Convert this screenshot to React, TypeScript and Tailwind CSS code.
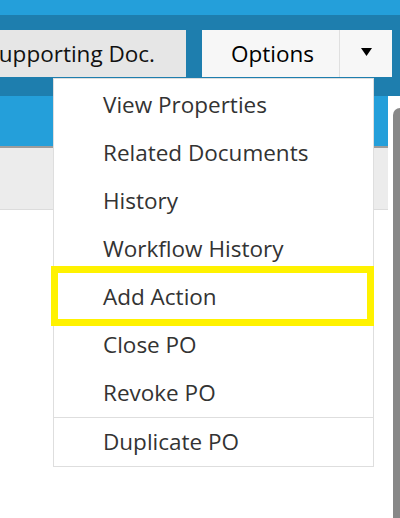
import { ReactNode } from 'react';

const items = [
  'View Properties',
  'Related Documents',
  'History',
  'Workflow History',
  'Add Action',
  'Close PO',
  'Revoke PO',
];

function MenuItem({ label, highlighted }: { label: string; highlighted?: boolean }) {
  return (
    <div className="relative h-[48px] flex items-center pl-[49px] text-[22.5px] text-[#333]">
      {label}
      {highlighted && (
        <div className="absolute left-[-3px] right-[-1px] top-[-7px] bottom-[-5px] border-[7px] border-[#fff200]" />
      )}
    </div>
  );
}

function ToolbarButton({ children, className }: { children: ReactNode; className?: string }) {
  return <div className={`h-[47px] shrink-0 flex items-center ${className ?? ''}`}>{children}</div>;
}

export default function App() {
  return (
    <div
      className="relative w-[400px] h-[518px] overflow-hidden bg-white"
      style={{ fontFamily: '"Open Sans", "Noto Sans", sans-serif' }}
    >
      {/* top strip */}
      <div className="h-[15px] bg-[#249fda]" />

      {/* toolbar */}
      <div className="h-[81px] bg-[#1e7eae] pt-[15px] flex">
        <ToolbarButton className="ml-[-60px] w-[246px] bg-[#e6e6e6] justify-end pr-[31px] text-[22.5px] text-[#111] whitespace-nowrap">
          Supporting Doc.
        </ToolbarButton>
        <ToolbarButton className="ml-[16px] w-[190px] bg-[#f7f7f7]">
          <div className="flex-1 flex justify-center pl-[4px] text-[22.5px] text-black">Options</div>
          <div className="w-[53px] h-full border-l border-[#e0e0e0] flex items-center justify-center pb-[4px]">
            <svg width="11" height="8" viewBox="0 0 11 8">
              <path d="M0 0 H11 L5.5 8 Z" fill="#000" />
            </svg>
          </div>
        </ToolbarButton>
      </div>

      {/* content area */}
      <div className="flex">
        <div className="w-[388px] shrink-0">
          <div className="h-[50px] bg-[#249fda]" />
          <div className="h-[2px] bg-[#9c9c9c]" />
          <div className="h-[62px] bg-[#ececec] border-b border-[#dcdcdc]" />
        </div>
        <div className="w-[12px] shrink-0 pt-[12px] flex justify-end">
          <div className="w-[7px] h-[420px] rounded-tl-[7px] bg-[#888]" />
        </div>
      </div>

      {/* dropdown menu */}
      <div className="absolute left-[53px] top-[78px] w-[321px] bg-white border border-[#dedede] pt-[2px]">
        {items.map((label) => (
          <MenuItem key={label} label={label} highlighted={label === 'Add Action'} />
        ))}
        <div className="h-px bg-[#dedede]" />
        <MenuItem label="Duplicate PO" />
      </div>
    </div>
  );
}
